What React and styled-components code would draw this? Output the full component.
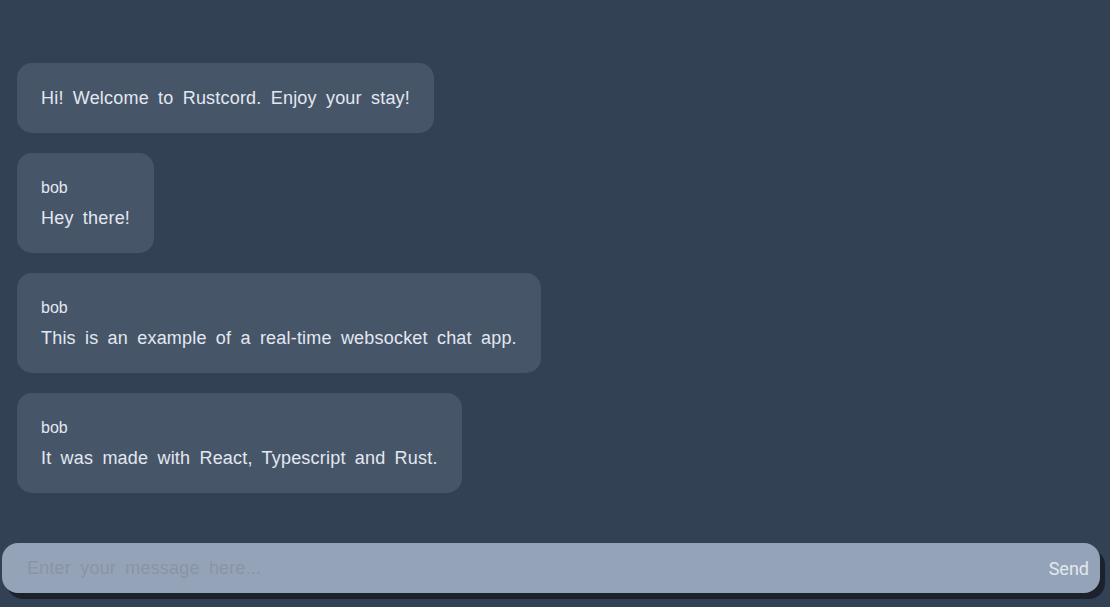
import React from "react";
import styled, { createGlobalStyle } from "styled-components";

const Global = createGlobalStyle`
  html, body { margin: 0; padding: 0; height: 100%; background: #334155; }
  #root { height: 100%; }
  * { box-sizing: border-box; }
`;

const Page = styled.div`
  height: 607px;
  display: flex;
  flex-direction: column;
  background: #334155;
  font-family: "Liberation Sans", Arial, sans-serif;
  color: #e2e8f0;
`;

const List = styled.div`
  flex: 1;
  display: flex;
  flex-direction: column;
  align-items: flex-start;
  gap: 20px;
  padding: 63px 17px 0;
`;

const Bubble = styled.div`
  background: #475569;
  border-radius: 15px;
  padding: 20px 24px;
`;

const Author = styled.div`
  font-size: 16px;
  line-height: 30px;
  color: #e2e8f0;
`;

const Text = styled.div`
  font-size: 18px;
  line-height: 30px;
  color: #e2e8f0;
  letter-spacing: 0.2px;
  word-spacing: 4px;
`;

const Form = styled.form`
  display: flex;
  align-items: center;
  margin: 0 10px 14px 2px;
  height: 50px;
  background: #94a3b8;
  border-radius: 16px;
  box-shadow: 5px 6px 0 #1b222d;
  padding: 0 11px 0 23px;
`;

const Input = styled.input`
  flex: 1;
  border: none;
  outline: none;
  background: transparent;
  font-family: "Liberation Sans", Arial, sans-serif;
  font-size: 18px;
  letter-spacing: 0.2px;
  word-spacing: 4px;
  color: #1e293b;
  &::placeholder { color: #8a94a4; }
`;

const Send = styled.button`
  border: none;
  background: transparent;
  color: #e2e8f0;
  font-family: Roboto, "Liberation Sans", sans-serif;
  font-size: 18px;
  padding: 0;
  cursor: pointer;
`;

const messages = [
  { text: "Hi! Welcome to Rustcord. Enjoy your stay!" },
  { author: "bob", text: "Hey there!" },
  { author: "bob", text: "This is an example of a real-time websocket chat app." },
  { author: "bob", text: "It was made with React, Typescript and Rust." },
];

export default function App() {
  return (
    <>
      <Global />
      <Page>
        <List>
          {messages.map((m, i) => (
            <Bubble key={i}>
              {m.author && <Author>{m.author}</Author>}
              <Text>{m.text}</Text>
            </Bubble>
          ))}
        </List>
        <Form onSubmit={(e) => e.preventDefault()}>
          <Input placeholder="Enter your message here..." />
          <Send type="submit">Send</Send>
        </Form>
      </Page>
    </>
  );
}
